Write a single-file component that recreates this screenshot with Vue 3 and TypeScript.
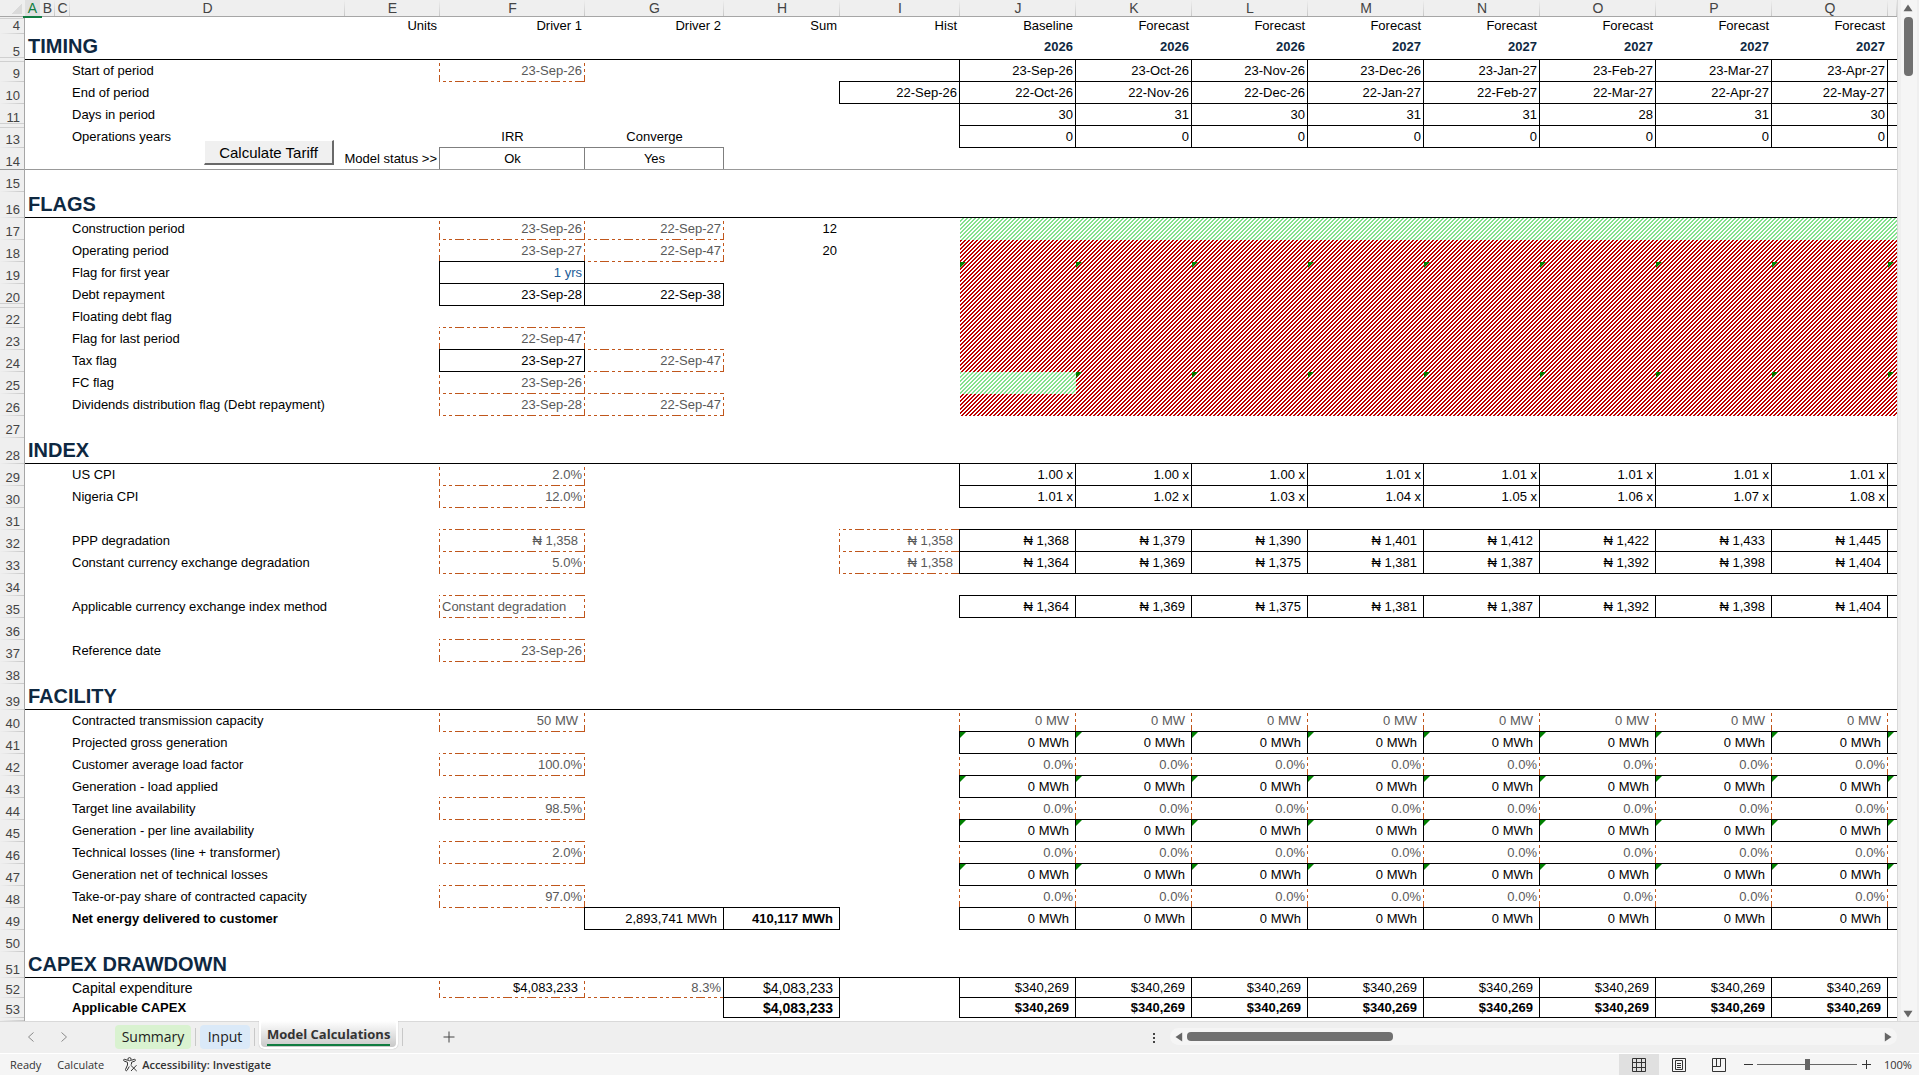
<script setup lang="ts">
import { ref } from 'vue'

type Cell = { t?: string; box?: 'black' | 'dash' | 'gray'; cls?: string; err?: boolean }
type Row = {
  n: string
  h: 'h17' | 'h20' | 'h22' | 'h26' | 'h3'
  label?: string
  labelCls?: string
  title?: string
  hiddenBelow?: boolean
  hiddenAbove?: boolean
  freeze?: boolean
  status?: string
  cells?: Record<string, Cell>
  series?: Cell[]
}

const letters = ['A', 'B', 'C', 'D', 'E', 'F', 'G', 'H', 'I', 'J', 'K', 'L', 'M', 'N', 'O', 'P', 'Q', '']
const drivers = ['E', 'F', 'G', 'H', 'I']

const dash = (t = '', cls = ''): Cell => ({ t, box: 'dash', cls: 'muted ' + cls })
const solid = (t = '', cls = ''): Cell => ({ t, box: 'black', cls })
const text = (t: string, cls = ''): Cell => ({ t, cls })

// Eight visible periods plus the clipped one at the right edge.
const run = (values: string[], make: (v: string) => Cell): Cell[] => [...values, ''].map(make)
const same = (v: string): string[] => Array(8).fill(v)
const errs = (cells: Cell[], from = 0): Cell[] => cells.map((c, i) => (i >= from ? { ...c, err: true } : c))
const red = (): Cell[] => run(same(''), () => ({ cls: 'no' }))
const naira = (v: string): Cell => solid(v && '₦ ' + v, 'unit')
const mwh = () => errs(run(same('0 MWh'), (v) => solid(v, 'unit')))
const zeroPct = () => run(same('0.0%'), (v) => dash(v))

const rows: Row[] = [
  {
    n: '4', h: 'h17', hiddenAbove: true,
    cells: { E: text('Units'), F: text('Driver 1'), G: text('Driver 2'), H: text('Sum'), I: text('Hist') },
    series: run(['Baseline', ...Array(7).fill('Forecast')], (v) => text(v)),
  },
  {
    n: '5', h: 'h26', title: 'TIMING', hiddenBelow: true,
    series: run(['2026', '2026', '2026', '2027', '2027', '2027', '2027', '2027'], (v) => text(v, 'year')),
  },
  {
    n: '9', h: 'h22', label: 'Start of period', cells: { F: dash('23-Sep-26') },
    series: run(['23-Sep-26', '23-Oct-26', '23-Nov-26', '23-Dec-26', '23-Jan-27', '23-Feb-27', '23-Mar-27', '23-Apr-27'], (v) => solid(v)),
  },
  {
    n: '10', h: 'h22', label: 'End of period', cells: { I: solid('22-Sep-26') },
    series: run(['22-Oct-26', '22-Nov-26', '22-Dec-26', '22-Jan-27', '22-Feb-27', '22-Mar-27', '22-Apr-27', '22-May-27'], (v) => solid(v)),
  },
  { n: '11', h: 'h22', label: 'Days in period', hiddenBelow: true, series: run(['30', '31', '30', '31', '31', '28', '31', '30'], (v) => solid(v)) },
  {
    n: '13', h: 'h22', label: 'Operations years',
    cells: { F: text('IRR', 'mid'), G: text('Converge', 'mid') },
    series: run(same('0'), (v) => solid(v)),
  },
  {
    n: '14', h: 'h22', freeze: true, status: 'Model status >>',
    cells: { F: { t: 'Ok', box: 'gray', cls: 'mid' }, G: { t: 'Yes', box: 'gray', cls: 'mid' } },
  },
  { n: '15', h: 'h22' },
  { n: '16', h: 'h26', title: 'FLAGS' },
  {
    n: '17', h: 'h22', label: 'Construction period',
    cells: { F: dash('23-Sep-26'), G: dash('22-Sep-27'), H: text('12') },
    series: run(same(''), () => ({ cls: 'yes' })),
  },
  { n: '18', h: 'h22', label: 'Operating period', cells: { F: dash('23-Sep-27'), G: dash('22-Sep-47'), H: text('20') }, series: red() },
  { n: '19', h: 'h22', label: 'Flag for first year', cells: { F: solid('1 yrs', 'input') }, series: errs(red()) },
  { n: '20', h: 'h22', label: 'Debt repayment', hiddenBelow: true, cells: { F: solid('23-Sep-28'), G: solid('22-Sep-38') }, series: red() },
  { n: '22', h: 'h22', label: 'Floating debt flag', series: red() },
  { n: '23', h: 'h22', label: 'Flag for last period', cells: { F: dash('22-Sep-47') }, series: red() },
  { n: '24', h: 'h22', label: 'Tax flag', cells: { F: solid('23-Sep-27'), G: dash('22-Sep-47') }, series: red() },
  { n: '25', h: 'h22', label: 'FC flag', cells: { F: dash('23-Sep-26') }, series: [{ cls: 'yes' }, ...errs(red()).slice(1)] },
  { n: '26', h: 'h22', label: 'Dividends distribution flag (Debt repayment)', cells: { F: dash('23-Sep-28'), G: dash('22-Sep-47') }, series: red() },
  { n: '27', h: 'h22' },
  { n: '28', h: 'h26', title: 'INDEX' },
  {
    n: '29', h: 'h22', label: 'US CPI', cells: { F: dash('2.0%') },
    series: run(['1.00 x', '1.00 x', '1.00 x', '1.01 x', '1.01 x', '1.01 x', '1.01 x', '1.01 x'], (v) => solid(v)),
  },
  {
    n: '30', h: 'h22', label: 'Nigeria CPI', cells: { F: dash('12.0%') },
    series: run(['1.01 x', '1.02 x', '1.03 x', '1.04 x', '1.05 x', '1.06 x', '1.07 x', '1.08 x'], (v) => solid(v)),
  },
  { n: '31', h: 'h22' },
  {
    n: '32', h: 'h22', label: 'PPP degradation', cells: { F: dash('₦ 1,358', 'unit'), I: dash('₦ 1,358', 'unit') },
    series: run(['1,368', '1,379', '1,390', '1,401', '1,412', '1,422', '1,433', '1,445'], naira),
  },
  {
    n: '33', h: 'h22', label: 'Constant currency exchange degradation', cells: { F: dash('5.0%'), I: dash('₦ 1,358', 'unit') },
    series: run(['1,364', '1,369', '1,375', '1,381', '1,387', '1,392', '1,398', '1,404'], naira),
  },
  { n: '34', h: 'h22' },
  {
    n: '35', h: 'h22', label: 'Applicable currency exchange index method', cells: { F: dash('Constant degradation', 'start') },
    series: run(['1,364', '1,369', '1,375', '1,381', '1,387', '1,392', '1,398', '1,404'], naira),
  },
  { n: '36', h: 'h22' },
  { n: '37', h: 'h22', label: 'Reference date', cells: { F: dash('23-Sep-26') } },
  { n: '38', h: 'h22' },
  { n: '39', h: 'h26', title: 'FACILITY' },
  { n: '40', h: 'h22', label: 'Contracted transmission capacity', cells: { F: dash('50 MW', 'unit') }, series: run(same('0 MW'), (v) => dash(v, 'unit')) },
  { n: '41', h: 'h22', label: 'Projected gross generation', series: mwh() },
  { n: '42', h: 'h22', label: 'Customer average load factor', cells: { F: dash('100.0%') }, series: zeroPct() },
  { n: '43', h: 'h22', label: 'Generation - load applied', series: mwh() },
  { n: '44', h: 'h22', label: 'Target line availability', cells: { F: dash('98.5%') }, series: zeroPct() },
  { n: '45', h: 'h22', label: 'Generation - per line availability', series: mwh() },
  { n: '46', h: 'h22', label: 'Technical losses (line + transformer)', cells: { F: dash('2.0%') }, series: zeroPct() },
  { n: '47', h: 'h22', label: 'Generation net of technical losses', series: mwh() },
  { n: '48', h: 'h22', label: 'Take-or-pay share of contracted capacity', cells: { F: dash('97.0%') }, series: zeroPct() },
  {
    n: '49', h: 'h22', label: 'Net energy delivered to customer', labelCls: 'bold',
    cells: { G: solid('2,893,741 MWh', 'unit'), H: solid('410,117 MWh', 'unit bold') },
    series: run(same('0 MWh'), (v) => solid(v, 'unit')),
  },
  { n: '50', h: 'h22' },
  { n: '51', h: 'h26', title: 'CAPEX DRAWDOWN' },
  {
    n: '52', h: 'h20', label: 'Capital expenditure', labelCls: 'large',
    cells: { F: { t: '$4,083,233', box: 'dash', cls: 'unit' }, G: dash('8.3%'), H: solid('$4,083,233', 'unit large') },
    series: run(same('$340,269'), (v) => solid(v, 'unit')),
  },
  {
    n: '53', h: 'h20', label: 'Applicable CAPEX', labelCls: 'bold',
    cells: { H: solid('$4,083,233', 'unit large bold') },
    series: run(same('$340,269'), (v) => solid(v, 'unit bold')),
  },
  { n: '', h: 'h3' },
]

const seriesOf = (r: Row): Cell[] => r.series ?? Array(9).fill({})
const driverCells = (r: Row): Cell[] => (r.status ? drivers.slice(1) : drivers).map((k) => r.cells?.[k] ?? {})
const cellClass = (c: Cell) => [c.box ? 'box-' + c.box : '', c.cls ?? '']

const zoom = ref(100)
</script>

<template>
  <div class="app">
    <div class="workspace">
      <div class="pane">
        <table class="sheet">
          <colgroup>
            <col class="c-num" /><col class="c-s" /><col class="c-s" /><col class="c-s" />
            <col class="c-d" /><col class="c-e" /><col class="c-f" /><col class="c-g" />
            <col class="c-p" /><col class="c-i" />
            <col v-for="i in 8" :key="i" class="c-p" />
            <col />
          </colgroup>
          <thead>
            <tr>
              <th class="corner"><span class="select-all"></span></th>
              <th v-for="(l, i) in letters" :key="i" scope="col" :class="{ current: l === 'A' }">{{ l }}</th>
            </tr>
          </thead>
          <tbody>
            <tr v-for="(r, ri) in rows" :key="ri" :class="[r.h, { section: r.title, freeze: r.freeze }]">
              <th scope="row" :class="{ 'gap-below': r.hiddenBelow, 'gap-above': r.hiddenAbove }">{{ r.n }}</th>
              <td v-if="r.title" colspan="4" class="title">{{ r.title }}</td>
              <template v-else>
                <td></td><td></td><td></td>
                <td v-if="r.status" colspan="2">
                  <button type="button" class="macro">Calculate Tariff</button>{{ r.status }}
                </td>
                <td v-else class="label" :class="r.labelCls">{{ r.label }}</td>
              </template>
              <td v-for="(c, i) in driverCells(r)" :key="'d' + i" :class="cellClass(c)">{{ c.t }}</td>
              <td v-for="(c, i) in seriesOf(r)" :key="'s' + i" :class="cellClass(c)">
                <span v-if="c.err" class="err"></span>{{ c.t }}
              </td>
            </tr>
          </tbody>
        </table>
      </div>
      <div class="vscroll">
        <svg class="arrow" viewBox="0 0 10 8" width="10" height="8"><path d="M5 0.5 9.5 7.2H.5Z" /></svg>
        <div class="vthumb"></div>
        <svg class="arrow end" viewBox="0 0 10 8" width="10" height="8"><path d="M5 7.5 9.5.8H.5Z" /></svg>
      </div>
    </div>

    <div class="tabbar">
      <div class="tabs">
        <button type="button" class="nav" aria-label="Previous sheet">
          <svg width="8" height="12" viewBox="0 0 8 12"><path d="M6.5 1.5 1.5 6l5 4.500" /></svg>
        </button>
        <button type="button" class="nav second" aria-label="Next sheet">
          <svg width="8" height="12" viewBox="0 0 8 12"><path d="M1.500 1.500 6.500 6l-5 4.500" /></svg>
        </button>
        <button type="button" class="tab summary">Summary</button>
        <span class="sep"></span>
        <button type="button" class="tab input-tab">Input</button>
        <span class="sep"></span>
        <button type="button" class="active-tab"><span>Model Calculations</span></button>
        <span class="sep"></span>
        <button type="button" class="add" aria-label="New sheet">
          <svg width="12" height="12" viewBox="0 0 12 12"><path d="M6 .5v11M.5 6h11" /></svg>
        </button>
      </div>
      <div class="hwrap">
        <svg class="dots" width="3" height="12" viewBox="0 0 3 12"><path d="M0 1h2v2H0zM0 5h2v2H0zM0 9h2v2H0z" /></svg>
        <div class="hscroll">
          <svg class="arrow" width="8" height="10" viewBox="0 0 8 10"><path d="M.5 5 7.200.5v9Z" /></svg>
          <div class="hthumb"></div>
          <svg class="arrow end" width="8" height="10" viewBox="0 0 8 10"><path d="M7.500 5 .800.500v9Z" /></svg>
        </div>
      </div>
    </div>

    <footer class="status">
      <span class="ready">Ready</span>
      <span class="calc">Calculate</span>
      <button type="button" class="access">
        <svg width="15" height="15" viewBox="0 0 15 15">
          <circle cx="6.500" cy="2.200" r="1.600" />
          <path d="M4.800 3.300 1.500 2.300C.4 2.200.2 3.600 1.100 4L4.500 5.300V8L2.500 12.500c-.3 1.200 1 1.700 1.600.8L6.300 9.500M8.200 3.300l3.300-1c1.100-.1 1.300 1.300.4 1.700L8.500 5.300V7.500M7.500 8l6.200 6M13.500 8.200 8 14" />
        </svg>
        Accessibility: Investigate
      </button>
      <div class="views">
        <button type="button" class="view on" aria-label="Normal">
          <svg width="14" height="14" viewBox="0 0 14 14"><path d="M.5 .5h13v13H.5zM4.500 .5v13M9.500 .5v13M.5 4.500h13M.5 9.500h13" /></svg>
        </button>
        <button type="button" class="view" aria-label="Page layout">
          <svg width="14" height="14" viewBox="0 0 14 14"><path d="M.5 .5h13v13H.5zM3.500 2.500h7v9h-7zM5 5.500h4M5 7.500h4M5 9.500h4" /></svg>
        </button>
        <button type="button" class="view" aria-label="Page break preview">
          <svg width="14" height="14" viewBox="0 0 14 14"><path d="M.5 .5h13v13H.5zM.5 8.500h8V.5M4.500 .5v8" /></svg>
        </button>
        <button type="button" class="step" aria-label="Zoom out"><svg width="9" height="9" viewBox="0 0 9 9"><path d="M0 4.500h9" /></svg></button>
        <input v-model.number="zoom" class="zoom" type="range" min="10" max="190" aria-label="Zoom" />
        <button type="button" class="step" aria-label="Zoom in"><svg width="9" height="9" viewBox="0 0 9 9"><path d="M0 4.500h9M4.500 0v9" /></svg></button>
        <span class="percent">{{ zoom }}%</span>
      </div>
    </footer>
  </div>
</template>

<style>
body {
  margin: 0;
}
</style>

<style scoped>
.app {
  display: flex;
  flex-direction: column;
  min-height: 100vh;
  background: #f5f5f5;
  font-family: 'Liberation Sans', Arial, sans-serif;
  color: #000;
}
button {
  margin: 0;
  padding: 0;
  border: 0;
  background: none;
  font: inherit;
  color: inherit;
}
.workspace {
  display: flex;
}
.pane {
  flex: 1;
  min-width: 0;
  overflow: hidden;
  background: #fff;
  isolation: isolate;
}

/* Sheet */
.sheet {
  width: 100%;
  table-layout: fixed;
  border-collapse: separate;
  border-spacing: 0;
  font-size: 13px;
  line-height: 16px;
}
.c-num { width: 25px; }
.c-s { width: 15px; }
.c-d { width: 275px; }
.c-e { width: 95px; }
.c-f { width: 145px; }
.c-g { width: 139px; }
.c-i { width: 120px; }
.c-p { width: 116px; }

th,
td {
  position: relative;
  box-sizing: border-box;
  padding: 0;
  white-space: nowrap;
}
td {
  padding-right: 3px;
  text-align: right;
}
.h17 > * { height: 17px; }
.h20 > * { height: 20px; }
.h22 > * { height: 22px; }
.h26 > * { height: 26px; }
.h3 > * { height: 3px; }

thead th {
  height: 17px;
  border-bottom: 1px solid #a6a6a6;
  background: linear-gradient(#efefef, #c8c8c8) right / 1px 100% no-repeat #efefef;
  font-size: 14px;
  font-weight: 400;
  color: #444;
}
thead th.current {
  background: #e0e0e0;
  color: #107c41;
}
thead th.current::after {
  content: '';
  position: absolute;
  z-index: 4;
  left: -2px;
  right: -2px;
  bottom: -2px;
  height: 2px;
  background: #107c41;
}
thead .corner {
  background: #efefef;
}
.select-all {
  position: absolute;
  top: 4px;
  left: 12px;
  width: 10px;
  height: 10px;
  background: linear-gradient(135deg, transparent 50%, #dadada 50%);
}
tbody th {
  padding-right: 4px;
  border-right: 1px solid #a6a6a6;
  background: linear-gradient(90deg, #efefef, #c8c8c8) bottom / 100% 1px no-repeat #efefef;
  vertical-align: bottom;
  text-align: right;
  font-size: 13px;
  line-height: 17px;
  font-weight: 400;
  color: #444;
}
.h3 th {
  line-height: 1px;
}
th.gap-below {
  background: #efefef;
}
th.gap-below::after {
  content: '';
  position: absolute;
  z-index: 1;
  left: 0;
  right: 0;
  bottom: -2px;
  height: 3px;
  border-top: 1px solid #d0d0d0;
  border-bottom: 1px solid #d0d0d0;
}
th.gap-above::after {
  content: '';
  position: absolute;
  left: 0;
  right: 0;
  top: 1px;
  height: 1px;
  background: #d0d0d0;
}

.label,
td.start {
  padding-left: 2px;
  padding-right: 0;
  text-align: left;
}
td.title {
  padding: 0 0 2px 3px;
  text-align: left;
  font-size: 20px;
  line-height: 22px;
  font-weight: 700;
  color: #0e2841;
}
.section td::before,
.freeze > *::before {
  content: '';
  position: absolute;
  z-index: 3;
  left: 0;
  right: 0;
  bottom: 0;
  height: 1px;
  background: #000;
}
.freeze > *::before {
  background: #999;
}
.year {
  font-weight: 700;
  color: #0e2841;
}
.bold {
  font-weight: 700;
}
.large {
  font-size: 14px;
}
.mid {
  padding-right: 0;
  text-align: center;
}
.unit {
  padding-right: 7px;
}
.muted {
  color: #595959;
}
.input {
  color: #215c98;
}

/* Cell frames share their left and top lines with the neighbouring cells. */
.box-black::after,
.box-gray::after,
.box-dash::after {
  content: '';
  position: absolute;
  top: -1px;
  right: 0;
  bottom: 0;
  left: -1px;
  pointer-events: none;
}
.box-black::after {
  z-index: 2;
  border: 1px solid #000;
}
.box-gray::after {
  z-index: 2;
  border: 1px solid #7f7f7f;
}
.box-dash::after {
  --c: #c0561c;
  --steps: var(--c) 0 1px, transparent 1px 4px, var(--c) 4px 7px, transparent 7px 10px, var(--c) 10px 13px, transparent 13px 16px, var(--c) 16px 24px;
  z-index: 1;
  background:
    repeating-linear-gradient(90deg, var(--steps)) top / 100% 1px no-repeat,
    repeating-linear-gradient(90deg, var(--steps)) bottom / 100% 1px no-repeat,
    repeating-linear-gradient(180deg, var(--steps)) left / 1px 100% no-repeat,
    repeating-linear-gradient(180deg, var(--steps)) right / 1px 100% no-repeat;
}
td:last-child::after {
  right: -1px;
}

/* Hatched flag fills; fixed attachment keeps the stripes continuous across cells. */
.no {
  background: linear-gradient(135deg, #c00000 31%, #fff 31% 56%, #c00000 56% 81%, #fff 81%) fixed 0 0 / 4px 4px;
}
.yes {
  background: linear-gradient(135deg, #83e28e 31%, #fff 31% 56%, #83e28e 56% 81%, #fff 81%) fixed 0 0 / 4px 4px;
}
.err {
  position: absolute;
  top: 0;
  left: 0;
  width: 6px;
  height: 6px;
  background: #008000;
  clip-path: polygon(0 0, 100% 0, 0 100%);
}

.macro {
  position: absolute;
  z-index: 3;
  top: -8px;
  left: 134px;
  width: 130px;
  height: 25px;
  padding-top: 1px;
  border: 1px solid #fff;
  border-right: 2px solid #696969;
  border-bottom: 2px solid #696969;
  background: #f0f0f0;
  font-size: 15px;
  line-height: 20px;
}

/* Scroll bars */
.vscroll {
  display: flex;
  flex-direction: column;
  align-items: center;
  box-sizing: border-box;
  width: 22px;
  padding: 4px 1px 3px 0;
  border-left: 1px solid #d9d9d9;
  background: linear-gradient(90deg, #efefef 3px, #f5f5f5 3px 19px, #efefef 19px);
}
.arrow {
  display: block;
  fill: #666;
}
.arrow.end {
  margin-top: auto;
}
.vthumb {
  width: 9px;
  height: 59px;
  margin-top: 5px;
  border-radius: 4px;
  background: #707070;
}

/* Sheet tabs */
.tabbar {
  display: flex;
  justify-content: space-between;
  box-sizing: border-box;
  height: 32px;
  border-top: 1px solid #d9d9d9;
  background: #efefef;
  font-family: 'Open Sans', 'Noto Sans', sans-serif;
}
.tabs {
  display: flex;
  align-items: flex-start;
  padding-left: 27px;
}
.nav {
  display: flex;
  width: 8px;
  margin-top: 9px;
}
.nav.second {
  margin: 9px 47px 0 25px;
}
.nav svg {
  fill: none;
  stroke: #8a8a8a;
}
.tab {
  width: 76px;
  height: 24px;
  margin-top: 3px;
  border-radius: 4px;
  background: #d9f2d0;
  font-size: 14px;
  line-height: 24px;
  color: #222;
}
.input-tab {
  width: 50px;
  background: #dae9f8;
}
.sep {
  width: 1px;
  height: 18px;
  margin: 6px 4px 0;
  background: #c8c8c8;
}
.active-tab {
  height: 28px;
  margin-top: -1px;
  padding: 0 2px 2px;
  border-radius: 0 0 5px 5px;
  background: #fff;
  box-shadow: 0 0 1px #999;
  font-size: 13px;
  font-weight: 700;
  line-height: 20px;
  color: #333;
}
.active-tab span {
  display: block;
  height: 26px;
  padding: 3px 6px 0;
  box-sizing: border-box;
  border-radius: 4px;
  background:
    linear-gradient(#107c41, #107c41) 6px 23px / calc(100% - 12px) 2px no-repeat,
    linear-gradient(#fff, #c8c8c8);
}
.add {
  margin: 9px 0 0 36px;
}
.add svg {
  display: block;
  fill: none;
  stroke: #444;
}
.hwrap {
  display: flex;
  align-items: center;
  flex: 0 0 766px;
}
.dots {
  fill: #444;
  margin-right: 14px;
}
.hscroll {
  display: flex;
  align-items: center;
  flex: 1;
  height: 17px;
  margin: 0 22px 2px 0;
  padding: 0 5px;
  border-radius: 9px;
  background: #f5f5f5;
}
.hthumb {
  width: 206px;
  height: 9px;
  margin-left: 4px;
  border-radius: 4px;
  background: #707070;
}
.hscroll .end {
  margin: 0 0 0 auto;
}

/* Status bar */
.status {
  display: flex;
  align-items: center;
  box-sizing: border-box;
  height: 22px;
  border-top: 1px solid #fff;
  padding: 0 8px 0 10px;
  font-family: 'Open Sans', 'Noto Sans', sans-serif;
  font-size: 11px;
  line-height: 20px;
  color: #333;
}
.calc {
  margin: 0 19px 0 16px;
}
.access {
  display: flex;
  align-items: center;
  gap: 4px;
  font-weight: 600;
}
.access svg {
  fill: none;
  stroke: #333;
}
.views {
  display: flex;
  align-items: center;
  align-self: stretch;
  margin-left: auto;
}
.view {
  display: flex;
  align-items: center;
  justify-content: center;
  align-self: stretch;
  width: 40px;
}
.view.on {
  background: #e0e0e0;
}
.view svg,
.step svg {
  display: block;
  fill: none;
  stroke: #333;
}
.step {
  width: 9px;
}
.view + .step {
  margin-left: 5px;
}
.zoom {
  appearance: none;
  width: 100px;
  height: 12px;
  margin: 0 5px 0 4px;
  background: linear-gradient(#666, #666) center / 100% 1px no-repeat;
}
.zoom::-webkit-slider-thumb {
  appearance: none;
  width: 5px;
  height: 11px;
  background: #666;
}
.percent {
  width: 27px;
  margin-left: 13px;
}
</style>
